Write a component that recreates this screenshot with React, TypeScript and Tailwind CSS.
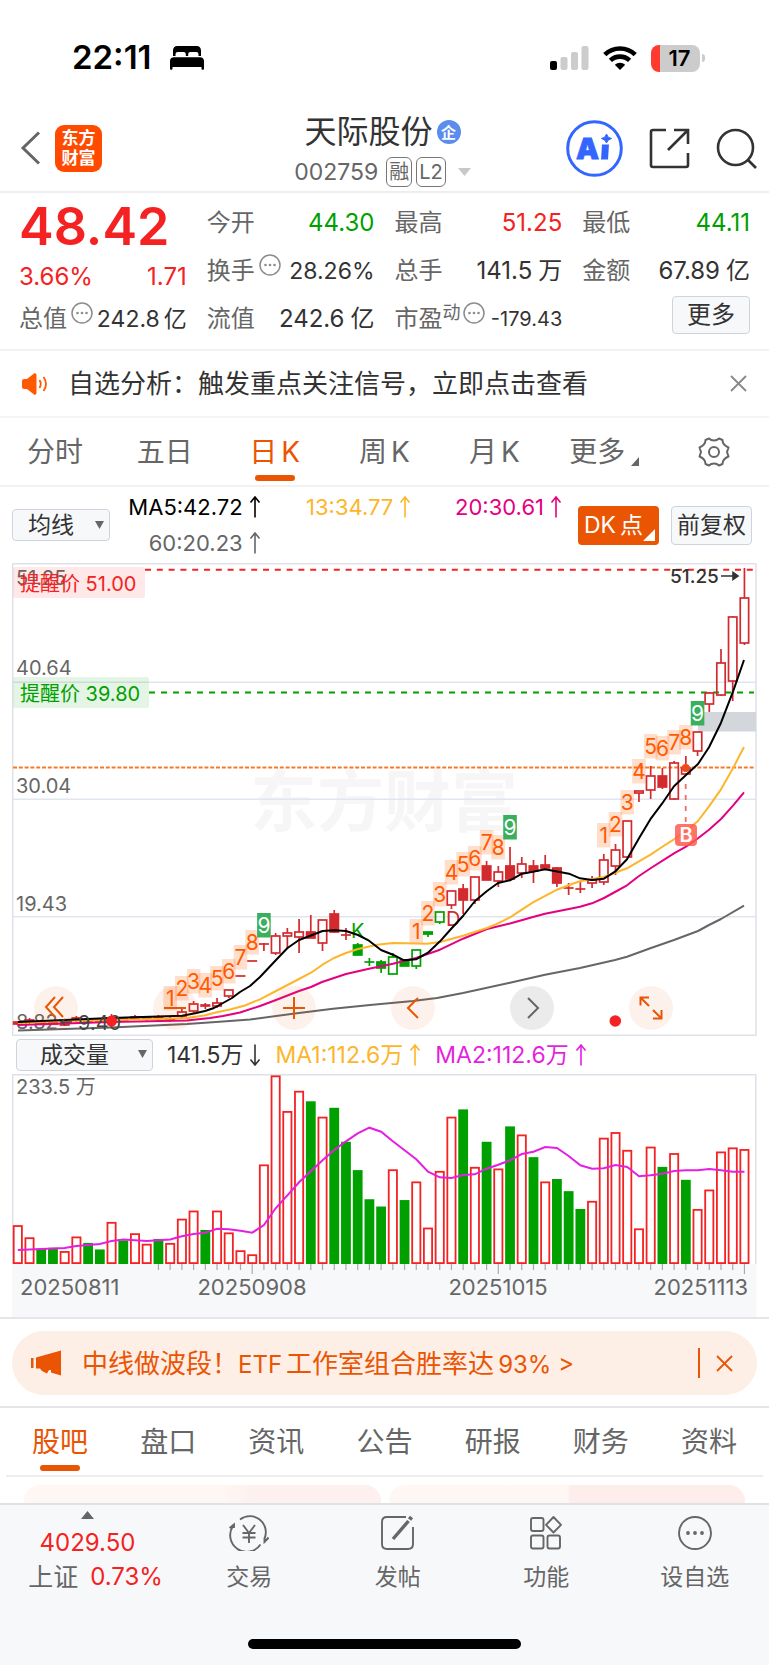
import type { ReactNode } from 'react';

const FIRST_X = 17.8;
const STEP = 11.72;
const cx = (i: number) => FIRST_X + STEP * i;

// [kind, body top, body bottom, high, low] - r/g filled, R/G hollow
type Candle = [string, number, number, number, number];
const candles: Candle[] = [
  ['r', 1022, 1024, 1021, 1025], ['r', 1020, 1021, 1018, 1024], ['r', 1022, 1023, 1021, 1025],
  ['r', 1022, 1024, 1021, 1025], ['r', 1023, 1025, 1021, 1026], ['r', 1018, 1020, 1016, 1022],
  ['r', 1020, 1022, 1019, 1024], ['r', 1020, 1022, 1019, 1023], ['r', 1018, 1021, 1014, 1023],
  ['r', 1019, 1021, 1018, 1022], ['r', 1017, 1018, 1015, 1020], ['r', 1018, 1019, 1016, 1021],
  ['r', 1017, 1018, 1015, 1021], ['r', 1019, 1020, 1017, 1022], ['R', 1012, 1016, 1008, 1018],
  ['R', 1004, 1011, 1001, 1013], ['r', 1005, 1006, 1003, 1009], ['R', 1003, 1006, 998, 1008],
  ['R', 990, 996, 990, 998], ['r', 976, 976, 976, 976], ['r', 961, 961, 961, 961],
  ['r', 944, 944, 943, 951], ['R', 936, 953, 933, 955], ['R', 933, 936, 928, 949],
  ['R', 932, 937, 919, 953], ['r', 932, 938, 915, 938], ['R', 920, 943, 920, 951],
  ['r', 914, 932, 910, 933], ['r', 935, 935, 928, 940], ['g', 945, 955, 943, 955],
  ['g', 962, 962, 958, 966], ['g', 962, 968, 960, 973], ['G', 957, 974, 953, 974],
  ['g', 960, 966, 959, 966], ['G', 950, 966, 950, 969], ['g', 932, 934, 932, 937],
  ['G', 912, 922, 912, 924], ['R', 891, 905, 891, 909], ['r', 889, 900, 884, 914],
  ['R', 877, 900, 877, 904], ['r', 866, 880, 861, 880], ['R', 872, 881, 866, 887],
  ['r', 866, 879, 847, 880], ['R', 864, 873, 857, 878], ['r', 866, 871, 860, 883],
  ['r', 865, 868, 855, 868], ['r', 868, 883, 867, 887], ['r', 888, 888, 883, 895],
  ['r', 889, 889, 882, 893], ['R', 880, 883, 876, 888], ['R', 860, 882, 854, 885],
  ['R', 850, 866, 844, 875], ['R', 821, 857, 821, 858], ['R', 791, 793, 791, 802],
  ['R', 776, 790, 766, 799], ['r', 776, 787, 768, 789], ['R', 763, 799, 761, 800],
  ['R', 768, 774, 756, 774], ['R', 732, 751, 732, 756], ['R', 693, 704, 692, 712],
  ['R', 663, 695, 649, 696], ['R', 617, 681, 616, 701], ['R', 598, 643, 568, 645],
];

const volumes = [
  48, 33, 19, 20, 16, 34, 26, 18, 52, 29, 38, 25, 31, 26, 56, 66, 42, 66, 39, 17, 12,
  123, 233, 189, 214, 201, 182, 193, 151, 116, 80, 71, 117, 79, 102, 45, 115, 182, 191, 120, 151, 118,
  170, 160, 132, 102, 105, 90, 68, 78, 156, 163, 141, 44, 145, 120, 137, 104, 68, 92, 139, 144, 142,
];
const downDays = [2, 3, 6, 7, 9, 12, 16, 25, 27, 28, 29, 30, 31, 33, 38, 40, 42, 44, 46, 47, 48, 55, 57];

// top of each nine-turn counter box, keyed by the first candle
const counters = [
  { start: 13, tops: [986, 976, 969, 973, 966, 959, 945, 930, 913] },
  { start: 34, tops: [919, 901, 882, 860, 852, 846, 830, 835, 815] },
  { start: 50, tops: [823, 812, 790, 759, 734, 736, 730, 725, 701] },
];

const ma5 =
  '18,1022 64,1020 111,1018 158,1016.5 182,1015.7 194,1013.5 205,1011 214,1008 223,1003 232,998 240,992 250,986 260,977 276,960 287.5,948 299,940 311,935.5 322.5,931 334,930.3 346,931 358,935 369,940.7 381,950 393,954.7 404,960.3 416,959.3 428,952.7 440,941.3 451,929 463,916 475,901 487,891 498,883 510,880.3 522,873.7 533,871.7 545,869.3 569,873.7 580,878.3 592,880 604,878.7 615,871.7 627,859.3 639,838.3 651,818.3 662,803.7 674,786.3 686,775 698,764 709,747.3 721,722.7 733,691.7 744,660';
const ma13 =
  '18,1023 64,1021 111,1020 158,1019 187,1018 204,1015.5 218,1012 230,1009.5 245,1005.5 260,999.3 276,991 299,979 311,972.7 322.5,964.7 334,958 346,953 358,949 377,944.7 393,943 427,943.7 440,942 463,935.7 487,928 498,923.3 510,917.3 533,902.3 557,889.7 569,885 580,881.3 604,877 627,868.3 651,854.3 662,847 674,839.3 686,830.7 698,821 709,806.3 721,789.3 733,768.3 744,747';
const ma20 =
  '18,1025 111,1022 187,1020.5 210,1018 223,1016 240,1012.5 260,1006 276,1000 299,991 311,987 322,982 346,974 369,968.7 393,963.7 416,958 440,949.7 463,938.7 487,929 510,923.5 533,917 545,913.7 569,909 580,906.7 592,903.3 604,898 615,892 627,885.3 639,876 651,868 674,853.3 686,846.7 698,838.3 709,829.7 721,819 733,805.7 744,792.3';
const ma60 =
  '18,1030.5 111,1027.5 187,1024 223,1021.5 250,1019.5 293,1013.7 333,1008.7 370,1005 413,1001 437,998 463,993 510,982.7 545,974.7 580,968 615,960 627,956.7 651,948 674,940 698,931 709,925 721,919 744,905.7';
const volMa: [number, number][] = [
  [0, 1250], [4, 1248], [5, 1246], [7, 1244], [8, 1241], [9, 1239.5], [11, 1241], [13, 1239.5], [14, 1236.3],
  [15, 1234], [16, 1232.7], [17, 1228.7], [18, 1229.3], [19, 1230.7], [20, 1232.7], [21, 1225], [22, 1208.3],
  [23, 1195.3], [24, 1182.3], [25, 1171.3], [26, 1160.3], [27, 1150], [28, 1141.3], [29, 1133.3], [30, 1127.7],
  [31, 1131.7], [32, 1141.3], [33, 1150.3], [34, 1159.3], [35, 1171.7], [36, 1177.3], [37, 1178], [38, 1175],
  [39, 1174.3], [40, 1168.7], [41, 1164.7], [42, 1160.3], [43, 1154], [44, 1151.7], [45, 1147], [46, 1148],
  [47, 1156], [48, 1165.3], [49, 1168.7], [50, 1168.3], [51, 1165], [52, 1167], [53, 1176.3], [54, 1175.3],
  [55, 1173.7], [56, 1171], [57, 1170.3], [58, 1170.3], [59, 1169], [60, 1170.3], [61, 1171.7], [62, 1171.7],
];

const Arrow = ({ down = false }: { down?: boolean }) => (
  <svg width="12" height="22" viewBox="0 0 12 22" fill="none" stroke="currentColor" strokeWidth="1.6">
    {down ? <path d="M6 0.5V21M1.5 15.5L6 21L10.5 15.5" /> : <path d="M6 21.5V1M1.5 6.5L6 1L10.5 6.5" />}
  </svg>
);

const Hint = () => (
  <svg width="22" height="22" viewBox="0 0 22 22" className="shrink-0">
    <circle cx="11" cy="11" r="10" fill="none" stroke="#8c8c8c" strokeWidth="1.5" />
    <circle cx="6.5" cy="11" r="1.3" fill="#8c8c8c" />
    <circle cx="11" cy="11" r="1.3" fill="#8c8c8c" />
    <circle cx="15.5" cy="11" r="1.3" fill="#8c8c8c" />
  </svg>
);

const Close = () => (
  <svg width="17" height="17" viewBox="0 0 17 17" fill="none" stroke="currentColor" strokeWidth="1.8">
    <path d="M1 1L16 16M16 1L1 16" />
  </svg>
);

type StatProps = { label: string; value: string; unit?: string; color?: string; extra?: ReactNode };

const Stat = ({ label, value, unit, color = 'text-[#333]', extra }: StatProps) => (
  <div className="flex h-12 items-center justify-between whitespace-nowrap">
    <span className="flex items-center text-2xl text-[#666]">
      {label}
      {extra}
    </span>
    <span className={color}>
      {value}
      {unit && <span className="ml-1.5">{unit}</span>}
    </span>
  </div>
);

const StatusBar = () => (
  <div className="flex h-[108px] items-center justify-between pt-2 pl-[72px] pr-16">
    <div className="flex items-center gap-[18px]">
      <span className="text-[33px] font-semibold text-black">22:11</span>
      <svg width="34" height="24" viewBox="0 0 34 24" fill="#000">
        <path d="M3 10V4.5C3 1.8 4.6 0 7.3 0H26.7C29.4 0 31 1.8 31 4.5V10H28.5V8.5C28.5 6.8 27.6 6 26 6H20.5C19 6 18.2 6.8 18.2 8.5V10H15.8V8.5C15.8 6.8 15 6 13.5 6H8C6.4 6 5.5 6.8 5.5 8.5V10Z" />
        <path d="M0 15C0 12.5 1.5 11.2 4 11.2H30C32.5 11.2 34 12.5 34 15V23C34 24 31.5 24 31.5 23V21H2.5V23C2.5 24 0 24 0 23Z" />
      </svg>
    </div>
    <div className="flex items-center gap-[14px]">
      <svg width="39" height="24" viewBox="0 0 39 24">
        <rect x="0" y="15" width="7" height="9" rx="2" fill="#000" />
        <rect x="10.5" y="11" width="7" height="13" rx="2" fill="#ccc" />
        <rect x="21" y="6" width="7" height="18" rx="2" fill="#ccc" />
        <rect x="31.5" y="0" width="7" height="24" rx="2" fill="#ccc" />
      </svg>
      <svg width="34" height="24" viewBox="0 0 34 24" fill="none" stroke="#000" strokeWidth="4.6">
        <path d="M1.8 8.6C10.3 0.4 23.7 0.4 32.2 8.6" />
        <path d="M7.4 14.4C12.8 9.3 21.2 9.3 26.6 14.4" />
        <path d="M17 24L11.8 18.7C14.8 16 19.2 16 22.2 18.7Z" fill="#000" stroke="none" />
      </svg>
      <div className="flex items-center gap-0.5">
        <div className="flex h-[27px] w-[49px] items-center justify-center rounded-lg bg-linear-to-r from-[#ff3b30] from-18% to-[#ccc] to-18% pl-2 text-[22px] font-semibold text-black">
          17
        </div>
        <div className="h-2 w-[3px] rounded-r-full bg-[#ccc]" />
      </div>
    </div>
  </div>
);

const Header = () => (
  <header className="flex items-start justify-between border-b-2 border-[#eee] pb-[3px] pl-5 pr-3">
    <div className="flex h-20 w-[247px] items-center gap-[14px]">
      <button type="button" aria-label="返回">
        <svg width="21" height="34" viewBox="0 0 21 34" fill="none" stroke="#666" strokeWidth="3">
          <path d="M19 1.5L3 17L19 32.5" />
        </svg>
      </button>
      <button type="button" className="flex h-[47px] w-[47px] flex-col items-center justify-center rounded-[9px] bg-[#ff4a00] text-[17px] leading-5 font-bold text-white">
        <span>东方</span>
        <span>财富</span>
      </button>
    </div>
    <div className="flex flex-col items-center pt-1">
      <div className="flex items-center gap-1">
        <h1 className="text-[32px] leading-10 text-[#333]">天际股份</h1>
        <span className="flex h-6 w-6 items-center justify-center rounded-full bg-[#5b8def] text-[15px] leading-none font-bold text-white">企</span>
      </div>
      <div className="flex items-center gap-1 pt-1 text-[#666]">
        <span className="pr-1 text-[23px] leading-8">002759</span>
        <span className="rounded-md border border-[#777] px-0.5 text-xl leading-7">融</span>
        <span className="rounded-md border border-[#777] px-0.5 text-xl leading-7">L2</span>
        <svg width="13" height="8" viewBox="0 0 13 8" fill="#c8c8c8" className="ml-2">
          <path d="M0 0H13L6.5 8Z" />
        </svg>
      </div>
    </div>
    <div className="flex h-20 w-[259px] items-center justify-end gap-[26px]">
      <button type="button" aria-label="AI">
        <svg width="57" height="57" viewBox="0 0 57 57">
          <circle cx="28.5" cy="28.5" r="26.8" fill="#fff" stroke="#3366ff" strokeWidth="3" />
          <text x="10" y="39" fontSize="29" fontWeight="900" fill="#3366ff" stroke="#3366ff" strokeWidth="0.8">A</text>
          <path d="M36 24.5H43L42 39.5H35Z" fill="#3366ff" />
          <path d="M40.5 14Q41.5 18 45.5 18.5Q41.5 19.5 40.5 23Q39.5 19.5 35.5 18.5Q39.5 18 40.5 14Z" fill="#3366ff" stroke="#3366ff" />
        </svg>
      </button>
      <button type="button" aria-label="分享">
        <svg width="41" height="41" viewBox="0 0 41 41" fill="none" stroke="#333" strokeWidth="2.6">
          <path d="M17 2H4Q2 2 2 4V37Q2 39 4 39H37Q39 39 39 37V25" />
          <path d="M25 2H39V16M38 3L19 22" />
        </svg>
      </button>
      <button type="button" aria-label="搜索">
        <svg width="41" height="41" viewBox="0 0 41 41" fill="none" stroke="#333" strokeWidth="2.6">
          <circle cx="19.5" cy="19.5" r="17.5" />
          <path d="M31.5 31.5L40 40" />
        </svg>
      </button>
    </div>
  </header>
);

const Quote = () => (
  <section className="grid grid-cols-4 gap-5 border-b-2 border-[#f2f2f2] px-[19px] pt-1.5 pb-1.5 text-2xl text-[#333]">
    <div className="whitespace-nowrap">
      <p className="text-[52px] leading-[56px] font-semibold text-[#f42222]">48.42</p>
      <div className="flex h-11 items-center justify-between text-[#f42222]">
        <span>3.66%</span>
        <span>1.71</span>
      </div>
      <div className="flex h-10 items-center justify-between">
        <span className="flex items-center text-[#666]">总值<span className="pb-3 pl-1"><Hint /></span></span>
        <span className="text-[23px]">242.8<span className="ml-1">亿</span></span>
      </div>
    </div>
    <div>
      <Stat label="今开" value="44.30" color="text-[#00a000]" />
      <Stat label="换手" value="28.26%" color="text-[23px] text-[#333]" extra={<span className="pb-3 pl-1"><Hint /></span>} />
      <Stat label="流值" value="242.6" unit="亿" />
    </div>
    <div>
      <Stat label="最高" value="51.25" color="text-[#f42222]" />
      <Stat label="总手" value="141.5" unit="万" />
      <Stat
        label="市盈"
        value="-179.43"
        color="text-xl text-[#333]"
        extra={<span className="flex items-center gap-0.5 pb-3 text-lg">动<Hint /></span>}
      />
    </div>
    <div>
      <Stat label="最低" value="44.11" color="text-[#00a000]" />
      <Stat label="金额" value="67.89" unit="亿" />
      <div className="flex justify-end pt-px">
        <button type="button" className="rounded border border-[#cfd4dc] bg-[#f7f8fa] px-3.5 leading-9">更多</button>
      </div>
    </div>
  </section>
);

const periods = ['分时', '五日', '日K', '周K', '月K'];

const PeriodTabs = () => (
  <nav className="grid h-[69px] grid-cols-7 border-b-2 border-[#f2f2f2] text-[28px] text-[#666]">
    {periods.map((p) => (
      <button key={p} type="button" className={`relative ${p === '日K' ? 'text-[#ea5504]' : ''}`}>
        {p[0]}
        <span className={p[1] === 'K' ? 'ml-1' : ''}>{p[1]}</span>
        {p === '日K' && <span className="absolute bottom-1 left-1/2 h-1.5 w-10 -translate-x-1/2 rounded-full bg-[#ea5504]" />}
      </button>
    ))}
    <button type="button" className="flex items-center justify-center gap-1.5">
      更多
      <svg width="8" height="9" viewBox="0 0 8 9" fill="#666" className="mt-5">
        <path d="M8 0V9H0Z" />
      </svg>
    </button>
    <button type="button" aria-label="设置" className="flex items-center justify-center">
      <svg width="32" height="30" viewBox="0 0 32 30" fill="none" stroke="#666" strokeWidth="2">
        <path d="M11 1.5Q13 3.5 16 3.5Q19 3.5 21 1.5L24.5 3Q24.5 8 30.5 10.5L29 15L30.5 19.5Q24.5 22 24.5 27L21 28.5Q19 26.5 16 26.5Q13 26.5 11 28.5L7.5 27Q7.5 22 1.5 19.5L3 15L1.5 10.5Q7.5 8 7.5 3Z" strokeLinejoin="round" />
        <circle cx="16" cy="15" r="5" />
      </svg>
    </button>
  </nav>
);

const Picker = ({ label, name, className }: { label: string; name: string; className: string }) => (
  <div className={`relative ${className}`}>
    <select aria-label={name} className="h-8 w-full appearance-none rounded border border-[#cfd4dc] bg-[#f7f8fa] pr-5 text-center text-[23px] leading-7 text-[#333]">
      <option>{label}</option>
    </select>
    <svg width="9" height="8" viewBox="0 0 9 8" fill="#666" className="pointer-events-none absolute top-3 right-1.5">
      <path d="M0 0H9L4.5 8Z" />
    </svg>
  </div>
);

const Average = ({ text, color }: { text: string; color: string }) => (
  <span className={`flex items-center justify-end gap-1.5 ${color}`}>
    {text}
    <Arrow />
  </span>
);

const IndicatorBar = () => (
  <div className="flex h-[76px] items-center gap-3 pr-[17px] pl-3 whitespace-nowrap">
    <Picker label="均线" name="主图指标" className="w-[98px] shrink-0" />
    <div className="-ml-3 grid flex-1 grid-cols-3 pb-px text-[22px] leading-9">
      <Average text="MA5:42.72" color="text-black" />
      <Average text="13:34.77" color="text-[#fdb52b]" />
      <Average text="20:30.61" color="text-[#e4007f]" />
      <Average text="60:20.23" color="text-[#666]" />
    </div>
    <button type="button" className="relative ml-1 h-[39px] w-[81px] rounded bg-[#ea5504] pr-2.5 text-[23px] text-white">
      DK<span className="ml-1">点</span>
      <svg width="12" height="12" viewBox="0 0 12 12" fill="#fff" className="absolute right-1 bottom-1">
        <path d="M12 0V12H0Z" />
      </svg>
    </button>
    <button type="button" className="h-[39px] w-[81px] rounded border border-[#cfd4dc] bg-[#f7f8fa] text-[23px] text-[#333]">前复权</button>
  </div>
);

const prices = [
  { label: '51.25', y: 585 },
  { label: '40.64', y: 675 },
  { label: '30.04', y: 793 },
  { label: '19.43', y: 911 },
  { label: '8.82', y: 1029 },
];

const tools = [
  { name: '快速后退', d: 'M21 11L12 21L21 31M29 11L20 21L29 31' },
  { name: '缩小', d: 'M11 22H33' },
  { name: '放大', d: 'M11 22H33M22 11V33' },
  { name: '后退', d: 'M27 12L17 22L27 32' },
  { name: '前进', d: 'M18 12L28 22L18 32' },
  { name: '全屏', d: 'M11.5 19.5V11.5H20M12 12L20 20M32.5 24V32.5H24M32 32L24 24' },
];

const PriceChart = () => (
  <div className="relative mx-3">
    <svg viewBox="12 563 745 473" className="block h-auto w-full" fill="none">
      <text x="250" y="826" fontSize="67" fontWeight="700" fill="#f6f6f6">东方财富</text>
      <path d="M12 682.3H756M12 799.3H756M12 916.7H756" stroke="#e0e5ee" strokeWidth="1.5" />
      <rect x="12.7" y="563.7" width="743.3" height="471.6" stroke="#dfe1e8" strokeWidth="1.5" />
      <rect x="698" y="712" width="58" height="19.5" fill="#d3d6db" />
      {prices.map((p) => (
        <text key={p.label} x="16" y={p.y} fontSize="20" fill="#666">{p.label}</text>
      ))}
      <rect x="13" y="567" width="132" height="31" rx="2" fill="#f42222" fillOpacity="0.1" />
      <text x="20" y="591" fontSize="20" fill="#f42222">提醒价 51.00</text>
      <rect x="13" y="677" width="136" height="31" rx="2" fill="#00a000" fillOpacity="0.1" />
      <text x="20" y="701" fontSize="20" fill="#00a000">提醒价 39.80</text>
      <path d="M145 569.7H756" stroke="#f42222" strokeWidth="2" strokeDasharray="6 5.8" />
      <path d="M149 692.5H754" stroke="#00a000" strokeWidth="2" strokeDasharray="6 6" />
      <path d="M13 767.5H754" stroke="#f47a2b" strokeWidth="2" strokeDasharray="4 1.8" />
      {candles.map(([kind, top, bottom, high, low], i) => {
        const color = kind === 'r' || kind === 'R' ? '#d32a2e' : '#00a000';
        const solid = kind === 'r' || kind === 'g';
        return (
          <g key={i} stroke={color} strokeWidth="1.7">
            <path d={`M${cx(i)} ${high}V${top}M${cx(i)} ${bottom}V${low}`} />
            {top === bottom ? (
              <path d={`M${cx(i) - 5} ${top}H${cx(i) + 5}`} />
            ) : (
              <rect x={cx(i) - 4.2} y={top} width="8.4" height={bottom - top} fill={solid ? color : 'none'} />
            )}
          </g>
        );
      })}
      {counters.map(({ start, tops }) =>
        tops.map((top, n) => (
          <g key={`${start}-${n}`}>
            <rect x={cx(start + n) - 6.8} y={top} width="13.6" height="24.5" fill={n === 8 ? '#3aaf5d' : '#ff5a00'} fillOpacity={n === 8 ? 1 : 0.2} />
            <text x={cx(start + n)} y={top + 20} fontSize="21" textAnchor="middle" fill={n === 8 ? '#fff' : '#ff5a00'}>{n + 1}</text>
          </g>
        )),
      )}
      <text x="351" y="938" fontSize="20" fill="#00a000">K</text>
      <text x="446" y="926" fontSize="20" fill="#d32a2e">D</text>
      <g strokeWidth="2" strokeLinejoin="round">
        <polyline points={ma60} stroke="#666" />
        <polyline points={ma20} stroke="#e4007f" />
        <polyline points={ma13} stroke="#fdb52b" />
        <polyline points={ma5} stroke="#000" />
      </g>
      <path d="M61 1022H72M65 1019L61 1022L65 1025" stroke="#444" strokeWidth="1.5" />
      <text x="78" y="1030" fontSize="20" fill="#444">9.40</text>
      <circle cx="111.5" cy="1021" r="5.5" fill="#f42222" />
      <circle cx="615.3" cy="1021" r="5.8" fill="#f42222" />
      <circle cx="685.7" cy="768" r="4" fill="#ee4a1c" />
      <path d="M685.7 784V822" stroke="#f36b62" strokeWidth="1.8" strokeDasharray="5 6" />
      <rect x="675" y="824" width="22" height="22" rx="4" fill="#ff5a4d" fillOpacity="0.85" />
      <text x="686" y="842" fontSize="20" fontWeight="600" textAnchor="middle" fill="#fff">B</text>
      <text x="670" y="583" fontSize="19" fontWeight="500" fill="#333">51.25</text>
      <path d="M721 576H736M733 572.5L738 576L733 579.5Z" stroke="#333" strokeWidth="1.6" fill="#333" />
    </svg>
    <div className="absolute bottom-1.5 left-[22px] flex gap-[75px]">
      {tools.map((t) => (
        <button
          key={t.name}
          type="button"
          aria-label={t.name}
          className={`rounded-full ${t.name === '前进' ? 'bg-[#777]/15 text-[#666]' : 'bg-[#ea5504]/8 text-[#ea5504]'}`}
        >
          <svg width="44" height="44" viewBox="0 0 44 44" fill="none" stroke="currentColor" strokeWidth="2">
            <path d={t.d} />
          </svg>
        </button>
      ))}
    </div>
  </div>
);

const VolumeChart = () => (
  <section className="border-b-2 border-[#e6e6ea] px-3">
    <div className="flex h-[38px] items-center gap-3.5 pl-1 text-[23px] whitespace-nowrap">
      <Picker label="成交量" name="副图指标" className="w-[137px]" />
      <span className="flex items-center gap-1.5 text-[#333]">141.5万<Arrow down /></span>
      <Average text="MA1:112.6万" color="text-[#fdb52b]" />
      <Average text="MA2:112.6万" color="text-[#e51fe0]" />
    </div>
    <svg viewBox="12 1074 745 243" className="block h-auto w-full" fill="none">
      <rect x="12" y="1264" width="744.5" height="53" fill="#f7f8fa" />
      <path d="M12.7 1264V1074.7H755.8V1264" stroke="#dfe1e8" strokeWidth="1.5" />
      <text x="16" y="1094" fontSize="20" fill="#666">233.5 万</text>
      {volumes.map((v, i) => {
        const h = (v * 189) / 233.5;
        return downDays.includes(i) ? (
          <rect key={i} x={cx(i) - 4.9} y={1264 - h} width="9.8" height={h} fill="#00a000" />
        ) : (
          <rect key={i} x={cx(i) - 4.1} y={1264.9 - h} width="8.2" height={h - 1.8} stroke="#f42222" strokeWidth="1.8" />
        );
      })}
      {volumes.map((_, i) =>
        i < 12 ? null : (
          <path key={i} d={`M${cx(i)} 1264V${[20, 41, 62].includes(i) ? 1274 : 1270}`} stroke="#aaa" strokeWidth="1.2" />
        ),
      )}
      <polyline points={volMa.map(([i, y]) => `${cx(i)},${y}`).join(' ')} stroke="#e51fe0" strokeWidth="2" />
      <g fontSize="22" fill="#666">
        <text x="20" y="1295">20250811</text>
        <text x="252" y="1295" textAnchor="middle">20250908</text>
        <text x="498" y="1295" textAnchor="middle">20251015</text>
        <text x="748" y="1295" textAnchor="end">20251113</text>
      </g>
    </svg>
  </section>
);

const infoTabs = ['股吧', '盘口', '资讯', '公告', '研报', '财务', '资料'];

const Footer = () => (
  <footer className="flex flex-1 flex-col justify-between border-t-2 border-[#dfe1e6] bg-[#f7f8fa] pb-4">
    <div className="grid grid-cols-[175px_repeat(4,minmax(0,1fr))] pt-1.5 text-[23px] text-[#666]">
      <button type="button" className="flex flex-col items-center whitespace-nowrap">
        <svg width="13" height="8" viewBox="0 0 13 8" fill="#666">
          <path d="M0 8L6.5 0L13 8Z" />
        </svg>
        <span className="pt-1.5 text-2xl leading-9 text-[#f42222]">4029.50</span>
        <span className="flex gap-3 pl-4 text-[25px] leading-8">上证 <span className="text-2xl leading-8 text-[#f42222]">0.73%</span></span>
      </button>
      <button type="button" className="flex flex-col items-center gap-2.5 pt-1">
        <svg width="40" height="36" viewBox="0 0 40 36" fill="none" stroke="#666" strokeWidth="1.9">
          <path d="M11 4.5A16 16 0 0 1 35.5 23.5M31.5 29.5A16 16 0 0 1 4 11M35.5 27L39.5 22.5M0.5 13L5 9.5V13M39.5 23L35.5 27V23" />
          <path d="M14 10L20 18L26 10M20 18V28M13.5 18H26.5M13.5 22.5H26.5" />
        </svg>
        <span className="leading-8">交易</span>
      </button>
      <button type="button" className="flex flex-col items-center gap-2.5 pt-1">
        <svg width="36" height="36" viewBox="0 0 36 36" fill="none" stroke="#666" strokeWidth="1.9">
          <path d="M26 2H7Q2 2 2 7V29Q2 34 7 34H28Q33 34 33 29V12" />
          <path d="M13 24L28.5 6" strokeWidth="3.4" />
          <path d="M29.5 4.5L31.5 2" strokeWidth="4" />
        </svg>
        <span className="leading-8">发帖</span>
      </button>
      <button type="button" className="flex flex-col items-center gap-2.5 pt-1">
        <svg width="34" height="36" viewBox="0 0 34 36" fill="none" stroke="#666" strokeWidth="1.9">
          <rect x="2" y="3" width="12.5" height="13" rx="2" />
          <rect x="2" y="20.5" width="12.5" height="13" rx="2" />
          <rect x="18.5" y="20.5" width="12.5" height="13" rx="2" />
          <path d="M24.5 2L32 9.8L24.5 17.5L17 9.8Z" strokeLinejoin="round" />
        </svg>
        <span className="leading-8">功能</span>
      </button>
      <button type="button" className="flex flex-col items-center gap-2.5 pt-1">
        <svg width="36" height="36" viewBox="0 0 36 36" fill="#666">
          <circle cx="18" cy="18" r="16" fill="none" stroke="#666" strokeWidth="1.9" />
          <circle cx="11" cy="18" r="1.9" />
          <circle cx="18" cy="18" r="1.9" />
          <circle cx="25" cy="18" r="1.9" />
        </svg>
        <span className="leading-8">设自选</span>
      </button>
    </div>
    <div className="mx-auto h-2.5 w-[273px] rounded-full bg-black" />
  </footer>
);

export default function App() {
  return (
    <div className="flex min-h-screen flex-col bg-white font-['Inter','Noto_Sans_CJK_SC',sans-serif]">
      <StatusBar />
      <Header />
      <Quote />
      <div className="flex h-[67px] items-center border-b-2 border-[#f5f5f5] px-[22px] text-[#333]">
        <svg width="26" height="22" viewBox="0 0 26 22" fill="#ff5a00" className="shrink-0">
          <path d="M0 8Q0 6 2 6H5L12 0.5Q14.5 -0.5 14.5 2V20Q14.5 22.5 12 21.5L5 16H2Q0 16 0 14Z" />
          <path d="M17.5 7Q20 11 17.5 15M21.5 4Q26.5 11 21.5 18" fill="none" stroke="#ff5a00" strokeWidth="1.8" />
        </svg>
        <p className="flex-1 pl-5 text-[26px] whitespace-nowrap">自选分析：触发重点关注信号，立即点击查看</p>
        <button type="button" aria-label="关闭" className="text-[#888]">
          <Close />
        </button>
      </div>
      <PeriodTabs />
      <IndicatorBar />
      <PriceChart />
      <VolumeChart />
      <div className="border-b-2 border-[#e6e6ea] px-3 pt-3 pb-[11px]">
        <div className="flex h-16 items-center rounded-[32px] bg-[#fdeee6] pr-6 pl-[18px] text-[#ea5504]">
          <svg width="32" height="26" viewBox="0 0 32 26" fill="#ea5504" className="shrink-0">
            <path d="M1 8H3.5V18H1ZM6 7.5L31 0.5V25.5L26 24L21 22.5V20H19L17 23.5L12 21L10 18.5H6Z" />
          </svg>
          <a href="#etf" className="flex-1 pl-5 text-[26px] whitespace-nowrap">
            中线做波段！<span className="mr-1 text-2xl">ETF</span>工作室组合胜率达<span className="ml-1 text-2xl">93% &gt;</span>
          </a>
          <span className="mr-4 h-[30px] w-0.5 bg-[#ea5504]" />
          <button type="button" aria-label="关闭广告">
            <Close />
          </button>
        </div>
      </div>
      <nav className="mx-1.5 grid h-[69px] shrink-0 grid-cols-7 border-b-2 border-[#eee] text-[28px] text-[#666]">
        {infoTabs.map((t, i) => (
          <button key={t} type="button" className={`relative ${i === 0 ? 'text-[#ea5504]' : ''}`}>
            {t}
            {i === 0 && <span className="absolute bottom-1 left-1/2 h-1.5 w-10 -translate-x-1/2 rounded-full bg-[#ea5504]" />}
          </button>
        ))}
      </nav>
      <div className="grid grid-cols-2 gap-2 px-6 pt-2">
        <div className="h-[18px] rounded-t-2xl bg-linear-to-r from-[#fef7f3] from-55% to-[#fdf0ee] to-65%" />
        <div className="h-[18px] rounded-t-2xl bg-linear-to-r from-[#fef7f3] from-50% to-[#fdeeec] to-51%" />
      </div>
      <Footer />
    </div>
  );
}
